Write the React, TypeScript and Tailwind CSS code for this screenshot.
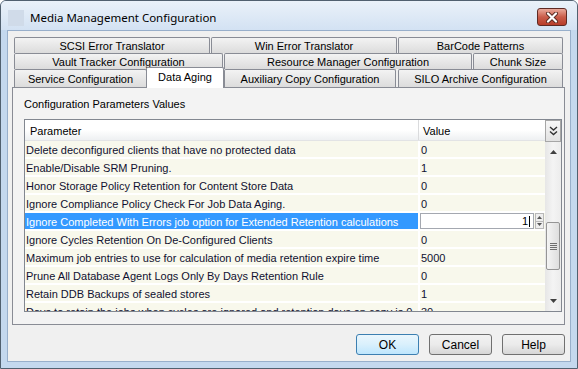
const rows: [string, string][] = [
  ["Delete deconfigured clients that have no protected data", "0"],
  ["Enable/Disable SRM Pruning.", "1"],
  ["Honor Storage Policy Retention for Content Store Data", "0"],
  ["Ignore Compliance Policy Check For Job Data Aging.", "0"],
  ["Ignore Completed With Errors job option for Extended Retention calculations", "1"],
  ["Ignore Cycles Retention On De-Configured Clients", "0"],
  ["Maximum job entries to use for calculation of media retention expire time", "5000"],
  ["Prune All Database Agent Logs Only By Days Retention Rule", "0"],
  ["Retain DDB Backups of sealed stores", "1"],
  ["Days to retain the jobs when cycles are ignored and retention days on copy is 0", "30"],
];

const SELECTED = 4;

function Tab({ label, className }: { label: string; className: string }) {
  return (
    <div
      className={
        "flex items-center justify-center border border-b-0 border-[#898c95] rounded-t-[2px] bg-gradient-to-b from-[#f3f3f3] to-[#dcdcdc] whitespace-nowrap pt-[1px] " +
        className
      }
    >
      {label}
    </div>
  );
}

function CloseButton() {
  return (
    <div className="ml-auto mt-[-2px] w-[30px] h-[18px] rounded-[3px] border border-[#5e2a24] bg-gradient-to-b from-[#e9a99b] via-[#c95c4a] to-[#b73c2a] flex items-center justify-center">
      <svg width="14" height="11" viewBox="0 0 14 11">
        <path d="M3 1.5 L11 9.5 M11 1.5 L3 9.5" stroke="#5a2a22" strokeWidth="4" strokeLinecap="round" />
        <path d="M3 1.5 L11 9.5 M11 1.5 L3 9.5" stroke="#ffffff" strokeWidth="2.2" strokeLinecap="round" />
      </svg>
    </div>
  );
}

function Button({ label, primary }: { label: string; primary?: boolean }) {
  return (
    <div
      className={
        "w-[63px] h-[21px] rounded-[3px] border flex items-center justify-center text-[12px] text-black " +
        (primary
          ? "border-[#3c7fb1] bg-gradient-to-b from-[#eaf6fd] via-[#d9f0fc] to-[#bee6fd]"
          : "border-[#707070] bg-gradient-to-b from-[#f2f2f2] via-[#ebebeb] to-[#d6d6d6]")
      }
    >
      {label}
    </div>
  );
}

function ScrollBar() {
  return (
    <div className="flex-1 flex flex-col items-center bg-gradient-to-r from-[#e6e6e6] via-[#f4f4f4] to-[#ececec]">
      <div className="h-[20px] flex items-center justify-center">
        <svg width="7" height="4" viewBox="0 0 7 4">
          <path d="M0 4 L3.5 0 L7 4 Z" fill="#404040" />
        </svg>
      </div>
      <div className="mt-[60px] w-[14px] h-[48px] rounded-[2px] border border-[#959595] bg-gradient-to-r from-[#f4f4f4] to-[#dedede] flex flex-col items-center justify-center gap-[1px]">
        <div className="w-[7px] h-[1px] bg-[#6f6f6f]" />
        <div className="w-[7px] h-[1px] bg-[#6f6f6f]" />
        <div className="w-[7px] h-[1px] bg-[#6f6f6f]" />
        <div className="w-[7px] h-[1px] bg-[#6f6f6f]" />
      </div>
      <div className="mt-auto h-[20px] flex items-center justify-center">
        <svg width="7" height="4" viewBox="0 0 7 4">
          <path d="M0 0 L3.5 4 L7 0 Z" fill="#404040" />
        </svg>
      </div>
    </div>
  );
}

export default function App() {
  return (
    <div className="w-[578px] h-[369px] bg-white font-['Liberation_Sans',sans-serif] text-[11px] text-[#101030]">
      <div className="w-full h-full flex flex-col rounded-t-[6px] border border-[#51606f] bg-[#c4d8ee] overflow-hidden">
        {/* title bar */}
        <div className="h-[29px] flex items-center pt-[5px] pl-[7px] pr-[10px] bg-gradient-to-b from-[#eaf1f9] to-[#d3e2f3]">
          <div className="w-[16px] h-[16px] bg-[#d0dbe9]" />
          <span className="ml-[6px] text-[11.5px] text-black font-['Noto_Sans',sans-serif]">
            Media Management Configuration
          </span>
          <CloseButton />
        </div>

        {/* client area */}
        <div className="mx-[6px] mb-[6px] flex-1 border border-[#98afcb] bg-[#f0f0f0] flex flex-col pt-[6px] pl-[4px] pr-[5px]">
          {/* tab rows */}
          <div className="flex flex-col pl-[2px] text-black">
            <div className="flex gap-[1px] h-[16px]">
              <Tab label="SCSI Error Translator" className="w-[196px]" />
              <Tab label="Win Error Translator" className="w-[186px]" />
              <Tab label="BarCode Patterns" className="w-[165px]" />
            </div>
            <div className="flex gap-[1px] h-[16px]">
              <Tab label="Vault Tracker Configuration" className="w-[209px]" />
              <Tab label="Resource Manager Configuration" className="w-[248px]" />
              <Tab label="Chunk Size" className="w-[90px]" />
            </div>
            <div className="flex items-end h-[18px]">
              <Tab label="Service Configuration" className="w-[133px] h-[18px]" />
              <div className="relative z-10 top-[1px] -ml-[1px] w-[78px] h-[21px] border border-b-0 border-[#898c95] rounded-t-[2px] bg-white flex items-center justify-center pb-[1px]">
                Data Aging
              </div>
              <Tab label="Auxiliary Copy Configuration" className="w-[172px] h-[18px]" />
              <Tab label="SILO Archive Configuration" className="ml-[2px] w-[165px] h-[18px]" />
            </div>
          </div>

          {/* tab page */}
          <div className="h-[238px] border border-[#898c95] bg-[#f3f3f3] flex flex-col">
            <div className="h-[31px] flex items-center pt-[2px] pl-[11px] text-black">
              Configuration Parameters Values
            </div>
            <div className="ml-[11px] w-[538px] h-[193px] border border-[#828790] bg-white flex overflow-hidden">
              <div className="w-[520px] flex flex-col">
                <div className="h-[21px] shrink-0 flex bg-gradient-to-b from-white via-white to-[#eef0f2] border-b border-[#e2e3e5] text-black">
                  <div className="w-[394px] border-r border-[#dadbdd] pl-[5px] pt-[2px] flex items-center">Parameter</div>
                  <div className="flex-1 pl-[4px] pt-[2px] flex items-center">Value</div>
                </div>
                {rows.map(([name, value], i) =>
                  i === SELECTED ? (
                    <div key={i} className="h-[18px] shrink-0 flex border-b-2 border-white">
                      <div className="w-[393px] bg-[#3399ff] text-white pl-[1px] pt-[2px] flex items-center whitespace-nowrap overflow-hidden">
                        {name}
                      </div>
                      <div className="w-[2px]" />
                      <div className="flex-1 flex items-center bg-[#f8f8ec]">
                        <div className="w-[114px] h-[16px] border border-[#a4a8b0] bg-white flex items-center justify-end pr-[3px] pt-[1px] text-black">
                          {value}
                          <div className="w-[1px] h-[11px] bg-black ml-[1px]" />
                        </div>
                        <div className="w-[9px] h-[16px] flex flex-col ml-[1px]">
                          <div className="flex-1 border border-[#b8b8b8] bg-[#eeeeee] flex items-center justify-center">
                            <svg width="5" height="3" viewBox="0 0 5 3"><path d="M0 3 L2.5 0 L5 3 Z" fill="#555" /></svg>
                          </div>
                          <div className="flex-1 border border-t-0 border-[#b8b8b8] bg-[#eeeeee] flex items-center justify-center">
                            <svg width="5" height="3" viewBox="0 0 5 3"><path d="M0 0 L2.5 3 L5 0 Z" fill="#555" /></svg>
                          </div>
                        </div>
                      </div>
                    </div>
                  ) : (
                    <div key={i} className="h-[18px] shrink-0 flex border-b-2 border-white">
                      <div className="w-[393px] bg-[#f8f8ec] pl-[1px] pt-[2px] flex items-center whitespace-nowrap overflow-hidden">
                        {name}
                      </div>
                      <div className="w-[2px]" />
                      <div className="flex-1 bg-[#f8f8ec] pl-[1px] pt-[2px] flex items-center">{value}</div>
                    </div>
                  )
                )}
              </div>
              <div className="w-[16px] flex flex-col">
                <div className="h-[22px] border border-[#a6a6a6] bg-gradient-to-b from-[#f7f7f7] to-[#e2e2e2] flex items-center justify-center">
                  <svg width="9" height="10" viewBox="0 0 9 10">
                    <path d="M1 1 L4.5 4 L8 1 M1 5.5 L4.5 8.5 L8 5.5" stroke="#333" strokeWidth="1.4" fill="none" />
                  </svg>
                </div>
                <ScrollBar />
              </div>
            </div>
          </div>

          {/* buttons */}
          <div className="mt-[9px] flex justify-end gap-[10px]">
            <Button label="OK" primary />
            <Button label="Cancel" />
            <Button label="Help" />
          </div>
        </div>
      </div>
    </div>
  );
}
